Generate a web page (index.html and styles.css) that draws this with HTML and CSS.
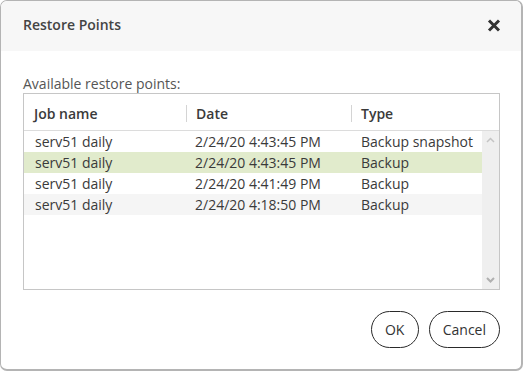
FILE: index.html
```html
<!DOCTYPE html>
<html>
<head>
<meta charset="utf-8">
<link rel="stylesheet" href="styles.css">
</head>
<body>
<div class="dialog">
  <div class="header">
    <div class="title">Restore Points</div>
    <svg class="close" width="14" height="13" viewBox="0 0 14 13"><path d="M2 1.5 L12 11.5 M12 1.5 L2 11.5" stroke="#333" stroke-width="3" stroke-linecap="butt"/></svg>
  </div>
  <div class="content">
    <div class="label">Available restore points:</div>
    <div class="table">
      <div class="thead">
        <div class="th">Job name</div>
        <div class="th sep">Date</div>
        <div class="th sep">Type</div>
      </div>
      <div class="tbody">
        <div class="rows">
          <div class="row"><div class="td">serv51 daily</div><div class="td">2/24/20 4:43:45 PM</div><div class="td">Backup snapshot</div></div>
          <div class="row selected"><div class="td">serv51 daily</div><div class="td">2/24/20 4:43:45 PM</div><div class="td">Backup</div></div>
          <div class="row"><div class="td">serv51 daily</div><div class="td">2/24/20 4:41:49 PM</div><div class="td">Backup</div></div>
          <div class="row alt"><div class="td">serv51 daily</div><div class="td">2/24/20 4:18:50 PM</div><div class="td">Backup</div></div>
        </div>
        <div class="scrollbar">
          <svg width="9" height="6" viewBox="0 0 9 6"><path d="M1 5 L4.5 1.5 L8 5" fill="none" stroke="#c4c4c4" stroke-width="1.5"/></svg>
          <svg width="9" height="6" viewBox="0 0 9 6"><path d="M1 1 L4.5 4.5 L8 1" fill="none" stroke="#b0b0b0" stroke-width="2"/></svg>
        </div>
      </div>
    </div>
    <div class="footer">
      <button class="btn ok">OK</button>
      <button class="btn">Cancel</button>
    </div>
  </div>
</div>
</body>
</html>
```
FILE: styles.css
```css
* { box-sizing: border-box; }
html, body { margin: 0; padding: 0; background: #fff; }
body { font-family: "Open Sans", "DejaVu Sans", sans-serif; color: #3a3a3a; }
.dialog {
  width: 523px;
  height: 371px;
  border: 1px solid #b4b4b4;
  border-right-width: 2px;
  border-bottom-width: 2px;
  border-radius: 7px;
  overflow: hidden;
  display: flex;
  flex-direction: column;
}
.header {
  height: 50px;
  background: #f7f7f7;
  display: flex;
  justify-content: space-between;
  align-items: flex-start;
  padding: 14px 20px 0 22px;
}
.title { font-size: 14px; font-weight: 600; color: #444; }
.close { margin-top: 4px; }
.content { padding: 24px 21px 0 22px; }
.label { font-size: 14px; line-height: 18px; color: #555; }
.table {
  height: 197px;
  border: 1px solid #c6c6c6;
  display: flex;
  flex-direction: column;
}
.thead {
  height: 37px;
  border-bottom: 1px solid #dcdcdc;
  display: grid;
  grid-template-columns: 162px 165px 1fr;
}
.th {
  font-size: 14px;
  font-weight: 600;
  line-height: 21px;
  padding: 9px 0 0 10px;
  position: relative;
  color: #3a3a3a;
}
.th.sep::before {
  content: "";
  position: absolute;
  left: 0;
  top: 11px;
  height: 17px;
  border-left: 1px solid #d4d4d4;
}
.tbody { flex: 1; display: flex; }
.rows { flex: 1; }
.row {
  height: 21px;
  display: grid;
  grid-template-columns: 160px 166px 1fr;
  font-size: 14px;
  line-height: 21px;
}
.td { padding-left: 11px; white-space: nowrap; }
.row.selected { background: #e1ebcc; }
.row.alt { background: #f5f5f5; }
.scrollbar {
  width: 17px;
  background: #efefef;
  display: flex;
  flex-direction: column;
  justify-content: space-between;
  align-items: center;
  padding: 6px 0 6px;
}
.footer {
  display: flex;
  justify-content: flex-end;
  gap: 10px;
  padding-top: 21px;
}
.btn {
  font-family: "Open Sans", "DejaVu Sans", sans-serif;
  font-size: 14px;
  color: #333;
  background: #fff;
  border: 1px solid #2a2a2a;
  border-radius: 19px;
  height: 37px;
  padding: 0 13px;
}
.btn.ok { width: 48px; padding: 0; }
```
